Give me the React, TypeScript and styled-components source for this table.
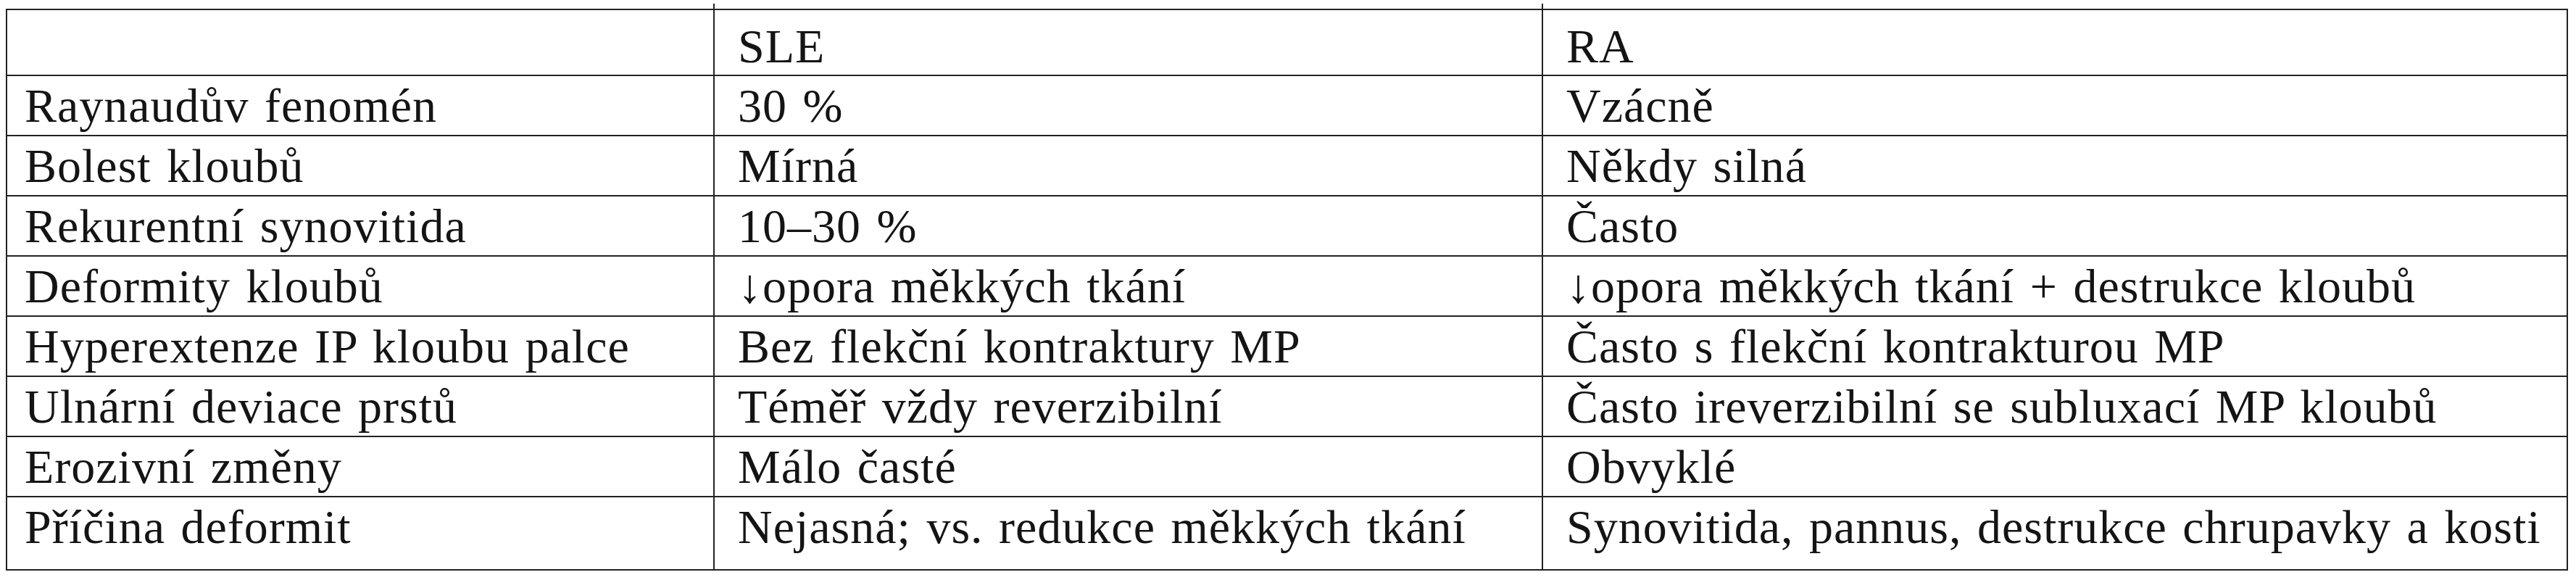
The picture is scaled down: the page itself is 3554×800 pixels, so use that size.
import React from "react";
import styled, { createGlobalStyle } from "styled-components";

const GlobalStyle = createGlobalStyle`
  html, body {
    margin: 0;
    padding: 0;
    background: #fff;
  }
  body {
    font-family: "Liberation Serif", "DejaVu Serif", serif;
    color: #141414;
  }
`;

const Page = styled.div`
  padding: 12px 0 0 8px;
`;

const Table = styled.div`
  display: grid;
  grid-template-columns: 976px 1143px 1414px;
  grid-template-rows: 91px repeat(7, 83px) 101px;
  width: max-content;
  border-left: 2px solid #222;
  border-top: 2px solid #222;
`;

const Cell = styled.div<{ $first?: boolean; $head?: boolean; $tick?: boolean }>`
  position: relative;
  box-sizing: border-box;
  border-right: 2px solid #222;
  border-bottom: 2px solid #222;
  padding: ${(p) => (p.$head ? "17px" : "8px")} 0 0 ${(p) => (p.$first ? "24px" : "32px")};
  font-size: 66px;
  line-height: 66px;
  letter-spacing: 1px;
  word-spacing: 4px;
  white-space: nowrap;

  ${(p) =>
    p.$tick &&
    `
    &::after {
      content: "";
      position: absolute;
      right: -2px;
      top: -9px;
      width: 2px;
      height: 9px;
      background: #222;
    }
  `}
`;

const head = ["", "SLE", "RA"];

const rows: string[][] = [
  ["Raynaudův fenomén", "30 %", "Vzácně"],
  ["Bolest kloubů", "Mírná", "Někdy silná"],
  ["Rekurentní synovitida", "10–30 %", "Často"],
  ["Deformity kloubů", "↓opora měkkých tkání", "↓opora měkkých tkání + destrukce kloubů"],
  ["Hyperextenze IP kloubu palce", "Bez flekční kontraktury MP", "Často s flekční kontrakturou MP"],
  ["Ulnární deviace prstů", "Téměř vždy reverzibilní", "Často ireverzibilní se subluxací MP kloubů"],
  ["Erozivní změny", "Málo časté", "Obvyklé"],
  ["Příčina deformit", "Nejasná; vs. redukce měkkých tkání", "Synovitida, pannus, destrukce chrupavky a kosti"],
];

const App: React.FC = () => {
  return (
    <Page>
      <GlobalStyle />
      <Table>
        {head.map((h, i) => (
          <Cell key={`h${i}`} $head $first={i === 0} $tick={i < 2}>
            {h}
          </Cell>
        ))}
        {rows.map((row, r) =>
          row.map((text, c) => (
            <Cell key={`${r}-${c}`} $first={c === 0}>
              {text}
            </Cell>
          ))
        )}
      </Table>
    </Page>
  );
};

export default App;
